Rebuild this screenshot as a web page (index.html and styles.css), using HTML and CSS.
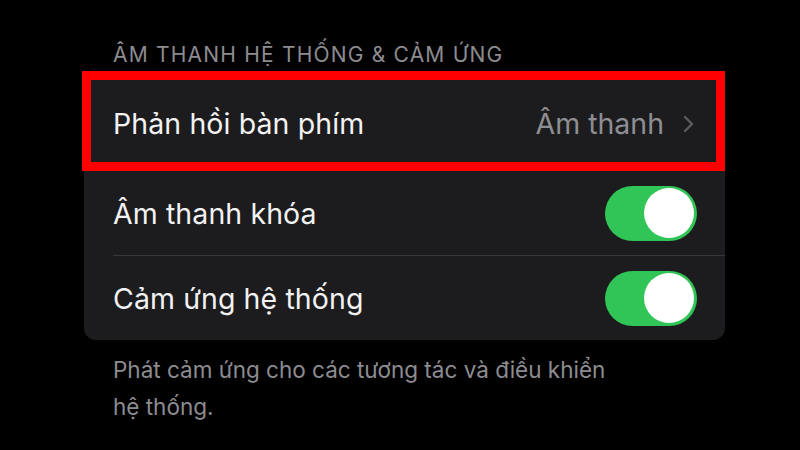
FILE: index.html
```html
<!DOCTYPE html>
<html lang="vi">
<head>
<meta charset="utf-8">
<link rel="stylesheet" href="styles.css">
</head>
<body>
<div class="page">
  <div class="section-title">ÂM THANH HỆ THỐNG &amp; CẢM ỨNG</div>
  <div class="card">
    <div class="row row-highlight">
      <span class="label">Phản hồi bàn phím</span>
      <span class="value">Âm thanh
        <svg class="chevron" width="14" height="20" viewBox="0 0 14 20"><path d="M3 3 L10 10 L3 17" fill="none" stroke="currentColor" stroke-width="2.4" stroke-linecap="round" stroke-linejoin="round"/></svg>
      </span>
    </div>
    <div class="row">
      <span class="label">Âm thanh khóa</span>
      <span class="toggle"><span class="knob"></span></span>
    </div>
    <div class="sep"></div>
    <div class="row">
      <span class="label">Cảm ứng hệ thống</span>
      <span class="toggle"><span class="knob"></span></span>
    </div>
  </div>
  <div class="footer">Phát cảm ứng cho các tương tác và điều khiển hệ thống.</div>
</div>
</body>
</html>
```

FILE: styles.css
```css
html, body {
  margin: 0;
  padding: 0;
  background: #000;
}
body {
  width: 800px;
  height: 450px;
  overflow: hidden;
  font-family: Inter, "Liberation Sans", sans-serif;
  color: #f2f2f2;
}
.page {
  padding: 42px 75px 0 84px;
}
.section-title {
  padding-left: 29px;
  font-size: 21px;
  line-height: 26px;
  color: #8c8c91;
  letter-spacing: 1.2px;
  margin-bottom: 3px;
}
.card {
  background: #1c1c1e;
  border-radius: 12px;
  width: 641px;
}
.row {
  display: flex;
  align-items: center;
  justify-content: space-between;
  height: 84px;
  padding: 0 28px 0 29px;
  box-sizing: border-box;
}
.row-highlight {
  height: 100px;
  border: 9px solid #ff0000;
  margin-left: -2px;
  padding: 4px 20px 0 22px;
}
.label {
  font-size: 28.5px;
  letter-spacing: 0.1px;
}
.value {
  display: flex;
  align-items: center;
  gap: 18px;
  font-size: 28.5px;
  color: #8e8e93;
}
.chevron {
  color: #5c5c60;
  margin-top: 1px;
}
.sep {
  height: 1px;
  background: #38383a;
  margin-left: 29px;
}
.toggle {
  display: flex;
  justify-content: flex-end;
  align-items: center;
  width: 92px;
  height: 55px;
  border-radius: 28px;
  background: #31c456;
  padding: 0 3px;
  box-sizing: border-box;
}
.knob {
  width: 50px;
  height: 50px;
  border-radius: 50%;
  background: #fff;
}
.footer {
  padding-left: 29px;
  width: 510px;
  margin-top: 11px;
  font-size: 22.5px;
  line-height: 37px;
  color: #8c8c91;
}
```
